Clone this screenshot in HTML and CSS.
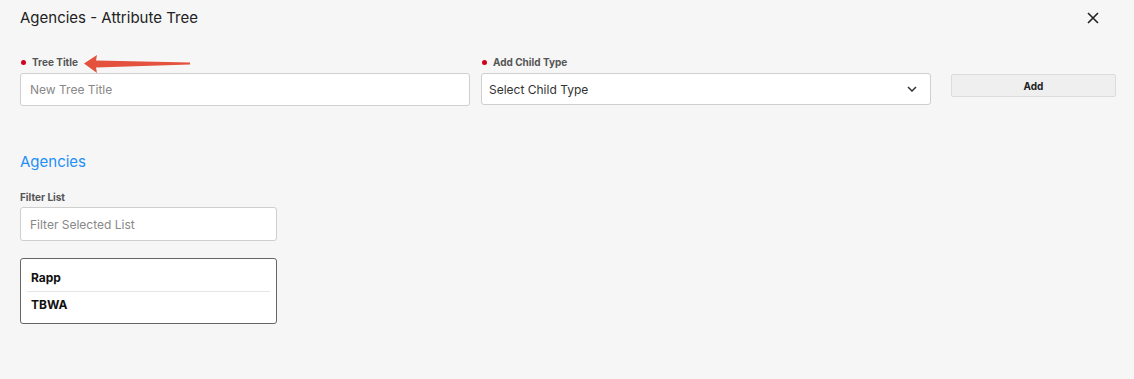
FILE: index.html
```html
<!DOCTYPE html>
<html lang="en">
<head>
  <meta charset="UTF-8">
  <title>Agencies - Attribute Tree</title>
  <link rel="stylesheet" href="styles.css">
</head>
<body>

<div class="modal">
  <div class="modal-header">
    <h2>Agencies - Attribute Tree</h2>
    <span class="close-btn">
      <svg width="12" height="12" viewBox="0 0 12 12"><path d="M1 1L11 11M11 1L1 11" stroke="#222" stroke-width="1.6" fill="none"/></svg>
    </span>
  </div>

  <div class="form-row">
    <div class="field">
      <label class="required">Tree Title</label>
      <input type="text" placeholder="New Tree Title">
    </div>
    <div class="field">
      <label class="required">Add Child Type</label>
      <div class="select">
        <span>Select Child Type</span>
        <svg width="10" height="6" viewBox="0 0 10 6"><path d="M1 1L5 5L9 1" stroke="#333" stroke-width="1.5" fill="none"/></svg>
      </div>
    </div>
    <button class="add-btn">Add</button>
  </div>

  <h3 class="section-title">Agencies</h3>

  <label class="plain">Filter List</label>
  <input type="text" class="filter" placeholder="Filter Selected List">

  <ul class="item-list">
    <li>Rapp</li>
    <li>TBWA</li>
  </ul>

  <!-- annotation arrow -->
  <svg class="arrow" width="110" height="20" viewBox="0 0 110 20">
    <path d="M0 8.5L13 0L12 5.5L106 7.5L106 9.5L12 12.5L13 18Z" fill="#e4513c"/>
  </svg>
</div>

</body>
</html>
```

FILE: styles.css
```css
body {
  margin: 0;
  background: #f6f6f6;
  font-family: Inter, "Liberation Sans", Arial, sans-serif;
  color: #222;
}
.modal {
  position: relative;
  padding: 8px 18px 0 20px;
}
.modal-header {
  display: flex;
  justify-content: space-between;
  align-items: center;
  height: 20px;
}
.modal-header h2 {
  margin: 0;
  font-size: 15px;
  font-weight: 400;
  line-height: 20px;
  color: #222;
}
.close-btn {
  display: flex;
  margin-right: 17px;
  cursor: pointer;
}
.form-row {
  display: flex;
  align-items: flex-start;
  margin-top: 27px;
}
.field {
  width: 450px;
  margin-right: 11px;
}
.field:nth-child(2) {
  margin-right: 20px;
}
label {
  display: block;
  font-size: 10px;
  font-weight: 700;
  line-height: 14px;
  color: #555;
  margin-bottom: 4px;
}
label.required::before {
  content: "";
  display: inline-block;
  width: 5px;
  height: 5px;
  border-radius: 50%;
  background: #d0021b;
  margin: 0 6px 1px 1px;
  vertical-align: middle;
}
input, .select {
  box-sizing: border-box;
  width: 100%;
  height: 33px;
  border: 1px solid #cfcfcf;
  border-radius: 3px;
  background: #fff;
  font-family: inherit;
  font-size: 12px;
  padding: 0 9px;
  outline: none;
}
input::placeholder {
  color: #888;
}
.select {
  display: flex;
  align-items: center;
  justify-content: space-between;
  padding: 0 13px 0 7px;
  color: #333;
  margin-top: 1px;
  height: 32px;
}
.add-btn {
  width: 165px;
  height: 23px;
  margin-top: 19px;
  background: #efefef;
  border: 1px solid #dcdcdc;
  border-radius: 2px;
  font-family: inherit;
  font-size: 10px;
  font-weight: 700;
  color: #222;
  cursor: pointer;
}
.section-title {
  margin: 46px 0 18px;
  font-size: 15px;
  font-weight: 400;
  line-height: 20px;
  color: #1e8ff5;
}
.plain {
  margin-bottom: 3px;
}
.filter {
  width: 257px;
  height: 34px;
}
.item-list {
  box-sizing: border-box;
  list-style: none;
  width: 257px;
  margin: 17px 0 0;
  padding: 6px 6px 5px;
  border: 1px solid #666;
  border-radius: 3px;
  background: #fff;
}
.item-list li {
  font-size: 12px;
  font-weight: 700;
  line-height: 26px;
  padding: 0 4px;
  color: #111;
}
.item-list li + li {
  border-top: 1px solid #e6e6e6;
}
.arrow {
  position: absolute;
  left: 84px;
  top: 55px;
}
```
